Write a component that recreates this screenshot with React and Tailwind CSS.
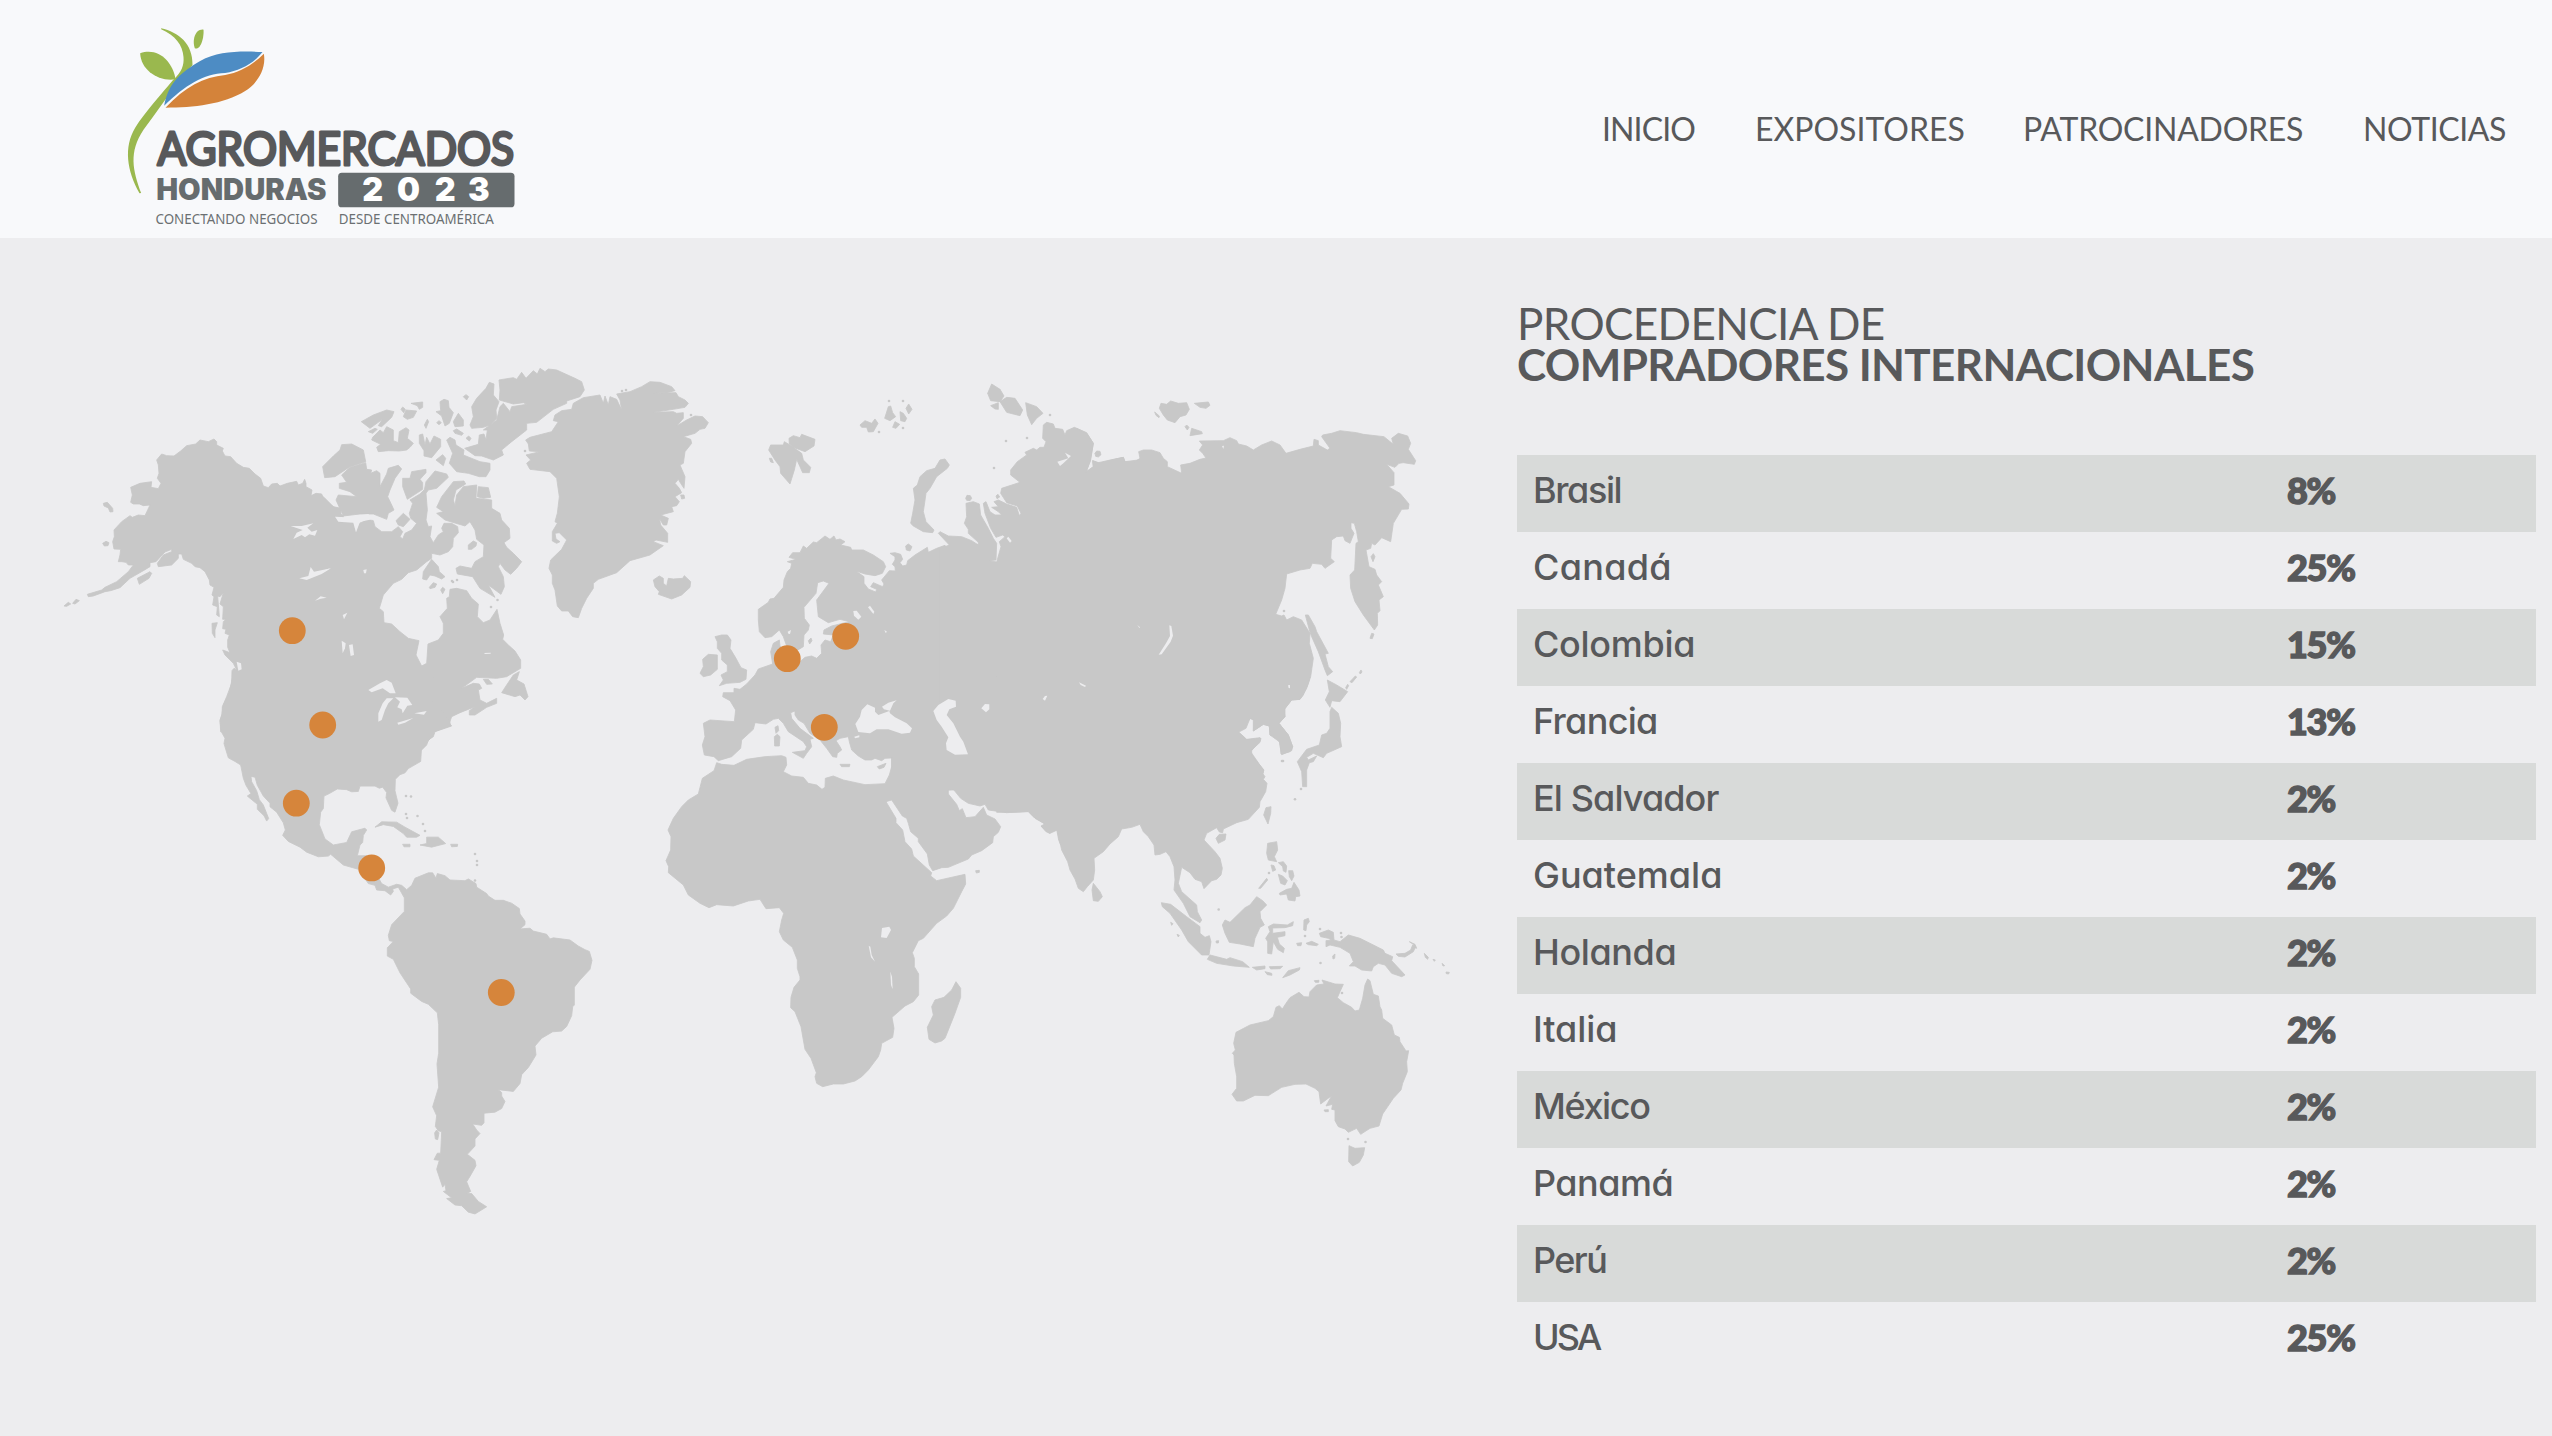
const NAV = [
  { label: "INICIO", width: "w-[92px]", tracking: "tracking-[-0.9px]" },
  { label: "EXPOSITORES", width: "w-[207px]", tracking: "tracking-[0px]" },
  { label: "PATROCINADORES", width: "w-[279px]", tracking: "tracking-[-0.25px]" },
  { label: "NOTICIAS", width: "w-[140px]", tracking: "tracking-[-0.4px]" },
];

const ROWS = [
  { country: "Brasil", share: "8%", tracking: "tracking-[-1.4px]" },
  { country: "Canadá", share: "25%", tracking: "tracking-[0.3px]" },
  { country: "Colombia", share: "15%", tracking: "tracking-[-0.3px]" },
  { country: "Francia", share: "13%", tracking: "tracking-[-0.7px]" },
  { country: "El Salvador", share: "2%", tracking: "tracking-[-0.9px]" },
  { country: "Guatemala", share: "2%", tracking: "tracking-[0px]" },
  { country: "Holanda", share: "2%", tracking: "tracking-[-0.4px]" },
  { country: "Italia", share: "2%", tracking: "tracking-[-0.1px]" },
  { country: "México", share: "2%", tracking: "tracking-[-1.4px]" },
  { country: "Panamá", share: "2%", tracking: "tracking-[-0.5px]" },
  { country: "Perú", share: "2%", tracking: "tracking-[-1.6px]" },
  { country: "USA", share: "25%", tracking: "tracking-[-3px]" },
];

const PINS = [
  [292.3, 630.7],
  [322.7, 725],
  [296.3, 803.2],
  [371.7, 867.9],
  [501.3, 992.5],
  [787.3, 658.7],
  [845.7, 636.3],
  [824.3, 727.3],
];

/* Each region keeps its own drawing units; `at` places it on the map. */
const LAND = [
  {
    name: "alaska-canada-west",
    at: "translate(50 350) scale(0.33333)",
    shapes: [
      "320,330 335,312 350,317 372,318 392,303 410,287 437,282 450,270 475,275 492,267 500,275 500,285 520,295 517,303 525,318 542,320 560,340 580,352 598,355 615,372 632,385 640,408 655,413 665,402 682,400 690,408 712,400 740,394 745,405 758,400 764,388 768,400 768,410 786,420 783,437 798,430 815,432 822,450 840,463 855,473 870,475 872,492 880,500 880,1145 512,1145 510,1110 516,1095 517,1070 530,1040 545,1000 546,962 552,955 560,960 550,940 525,915 518,900 540,908 533,892 533,870 538,855 525,850 528,838 518,836 520,815 528,808 518,808 520,770 510,762 520,728 510,740 503,738 508,800 500,795 502,770 488,765 492,740 486,735 492,712 480,705 478,690 465,665 450,653 435,650 425,640 400,628 395,612 385,612 385,625 365,645 325,650 322,640 340,615 365,605 365,598 345,606 318,635 300,638 300,650 280,662 240,685 210,713 182,722 165,725 130,738 115,740 112,733 155,720 165,712 200,695 235,665 250,645 235,645 228,637 215,635 205,635 210,615 212,598 192,597 188,575 193,560 192,540 215,515 240,497 247,502 265,495 285,497 293,480 300,465 280,467 268,462 250,462 242,457 247,435 242,412 270,400 305,395 303,412 325,416 333,400 322,385 327,370 325,345",
      "262,685 300,665 305,670 297,685 268,703",
      "42,768 55,757 62,762 50,769",
      "68,760 78,748 88,752 75,762",
      "160,460 172,457 188,475 189,485 180,486 175,474 162,468",
      "158,580 168,574 177,578 174,587 163,588",
      "486,820 502,818 495,840 495,863 487,850",
    ],
  },
  {
    name: "canada-east-greenland",
    at: "translate(320 350) scale(0.33333)",
    shapes: [
      "0,432 15,445 40,470 62,475 62,492 70,499 42,502 55,515 100,517 108,547 118,520 145,508 160,512 165,530 185,545 215,545 235,530 248,545 240,560 248,567 255,550 275,540 290,520 272,505 268,490 278,460 270,450 300,432 312,420 318,430 322,480 318,510 325,530 335,528 330,560 340,578 355,555 370,545 365,535 372,520 395,520 413,530 415,548 400,565 398,590 385,605 360,615 335,610 335,625 320,635 290,660 265,668 245,688 220,700 190,735 178,775 190,785 192,818 215,822 240,845 265,865 297,872 288,915 305,948 320,940 324,882 355,870 370,850 370,820 360,800 382,775 380,745 388,740 390,718 410,715 440,722 455,745 475,762 472,800 490,818 510,810 531,778 540,820 551,855 548,868 565,885 585,903 602,930 602,955 580,968 560,980 530,985 470,982 425,1015 460,1000 478,1002 485,1015 475,1020 480,1050 500,1060 530,1045 530,1060 500,1072 465,1095 448,1095 448,1082 465,1070 420,1088 395,1100 388,1120 395,1128 345,1145 340,1160 325,1170 320,1185 305,1200 0,1200",
      "598,965 590,990 612,1002 624,1040 615,1050 600,1035 585,1040 545,1028 560,1005 580,975",
      "490,988 505,988 517,1002 500,1003",
      "8,350 40,318 60,300 65,284 95,282 130,300 137,335 90,350 45,380 14,383",
      "65,375 90,352 137,338 140,358 155,360 152,370 170,362 180,370 180,410 200,372 205,355 235,346 245,357 225,385 210,420 203,440 215,465 222,480 205,490 200,508 160,492 120,492 70,498 48,450 55,435 110,440 90,425 58,415 58,400 80,397",
      "248,385 270,385 275,365 318,358 318,368 300,388 308,398 308,418 262,448 248,410",
      "318,430 312,425 318,395 345,363 380,372 385,382 350,415 325,420",
      "228,512 250,490 270,508 250,530 235,525",
      "350,472 365,440 400,395 432,393 437,402 408,420 400,450 405,467 410,435 430,410 470,405 468,445 515,450 515,475 540,490 545,510 568,535 570,565 552,578 560,592 580,610 605,635 590,655 572,673 555,660 540,640 535,650 550,680 553,710 543,733 505,705 525,742 480,715 458,680 412,672 408,655 420,648 455,655 465,635 490,620 492,585 470,568 465,540 450,515 435,528 375,510 350,490 370,485",
      "475,410 505,413 512,442 490,445 472,440",
      "388,340 398,310 380,270 390,262 405,270 408,285 432,300 430,315 480,335 510,340 510,360 498,380 478,380 445,370 410,365",
      "434,295 475,283 478,255 492,252 498,270 502,240 490,240 530,210 540,170 550,160 570,185 575,170 620,163 610,158 580,162 538,150 540,120 537,90 580,83 590,88 605,67 618,85 640,62 652,72 660,55 675,65 685,57 710,60 765,85 785,95 793,120 780,140 740,153 740,160 700,178 650,217 620,220 620,240 575,275 545,300 550,315 520,330 485,318 465,317",
      "450,225 460,200 455,170 470,145 498,115 508,97 522,102 520,135 537,155 528,180 530,205 510,225 490,232 455,235",
      "308,687 310,665 335,628 355,650 358,665 375,680 365,687 345,678 330,675 320,690",
      "328,712 340,698 350,702 345,712 330,716",
      "362,720 368,712 375,718 368,731",
      "445,585 460,573 470,578 468,588 455,598 445,598",
      "158,262 180,240 190,248 200,230 220,240 220,272 235,278 238,245 258,233 267,240 262,265 280,280 270,292 260,300 238,303 205,302 175,305 170,292 182,283 155,270",
      "124,215 160,195 200,180 222,185 215,202 185,230 175,227 187,208 150,235",
      "145,245 165,235 172,238 158,250",
      "250,200 258,180 290,183 280,202 262,208",
      "273,160 308,156 308,172 298,178 292,167",
      "348,185 362,182 360,155 372,148 385,152 387,172 400,188 388,220 375,228 365,198",
      "298,255 308,252 315,285 320,262 330,282 342,258 362,268 362,290 335,323 312,318 312,302 298,280",
      "348,330 368,314 377,325 370,347",
      "400,215 415,190 430,210 430,228 405,230",
      "400,242 410,237 430,250 425,256 405,250",
      "430,140 438,134 446,140 440,150",
      "313,225 322,208 326,215 318,235",
      "438,265 446,258 453,265 448,273",
      "350,218 357,212 364,218 357,224",
      "243,178 248,171 256,178 251,188",
      "617,270 630,262 695,245 715,215 700,212 705,195 725,182 755,178 760,160 790,143 840,135 850,160 855,138 865,165 870,140 890,148 905,180 900,150 890,132 930,125 965,110 990,95 1020,97 1055,110 1065,122 1040,128 990,130 1068,128 1075,140 1095,150 1105,160 1095,172 1060,178 1000,187 1060,185 1070,190 1090,188 1090,205 1070,228 1100,210 1125,198 1148,200 1165,218 1155,235 1140,238 1125,250 1090,260 1112,268 1115,280 1095,305 1090,340 1080,345 1095,380 1092,415 1082,400 1075,388 1065,400 1078,415 1085,428 1065,440 1078,455 1070,467 1055,470 1060,485 1022,495 1045,505 1040,525 1030,525 1018,505 1022,525 1043,550 1043,577 1008,570 1000,575 1030,587 990,615 930,632 890,668 835,688 820,700 820,715 800,745 785,775 775,803 758,800 745,783 725,783 712,768 705,720 697,700 697,675 687,655 692,630 725,598 740,570 730,560 718,548 705,550 708,567 720,575 710,580 697,573 697,545 712,520 705,515 712,490 718,440 710,385 690,365 630,358 620,340 632,330 618,315 660,305 628,303 625,282",
      "1000,690 1018,678 1030,685 1030,700 1040,708 1045,685 1060,687 1088,685 1093,677 1112,695 1110,712 1085,735 1055,747 1015,733 1018,725 1005,710",
      "1082,435 1092,435 1094,445 1085,447",
    ],
  },
  {
    name: "usa-south-america",
    at: "translate(200 680) scale(0.33333 0.35714)",
    shapes: [
      "97,-5 88,35 70,70 66,95 60,115 64,145 75,163 72,178 85,218 105,228 122,238 130,275 138,295 153,318 142,325 172,348 172,362 192,380 200,395 206,388 190,350 178,335 170,310 155,285 153,270 165,272 172,295 190,325 210,345 210,355 230,370 250,400 256,420 248,435 265,452 300,468 320,482 355,495 385,493 392,488 430,518 475,530 505,570 525,575 530,588 555,590 572,602 580,592 578,585 595,580 613,610 613,648 575,685 565,715 568,730 580,732 562,750 562,773 580,782 600,820 632,865 632,877 665,900 685,908 712,932 716,965 716,1045 711,1075 716,1140 698,1195 710,1220 706,1250 715,1262 725,1265 722,1325 712,1325 702,1343 718,1345 710,1370 728,1420 735,1412 738,1430 730,1432 755,1450 740,1452 765,1470 785,1472 805,1490 825,1495 860,1475 835,1460 815,1438 800,1438 790,1460 800,1438 812,1432 800,1405 813,1385 828,1360 825,1345 802,1328 825,1305 825,1285 840,1270 830,1260 818,1243 845,1247 852,1240 852,1213 885,1210 905,1200 915,1180 905,1165 905,1155 895,1147 940,1152 960,1130 965,1105 985,1085 1008,1050 1005,1025 1025,1003 1058,985 1085,983 1100,970 1115,940 1118,915 1123,910 1123,860 1140,840 1170,810 1176,785 1168,760 1155,755 1135,745 1110,728 1060,722 1050,725 1040,712 1000,703 990,695 960,697 975,685 975,675 960,655 958,640 935,625 910,617 885,617 865,605 860,598 830,580 828,570 805,557 795,562 750,560 735,548 712,542 708,555 698,540 685,540 645,555 635,575 620,587 605,575 590,572 565,580 545,570 530,545 505,500 500,492 472,492 480,462 488,455 490,435 500,420 495,415 455,425 440,455 400,462 375,445 358,405 362,370 370,360 372,325 388,318 412,305 440,307 455,313 475,312 480,297 525,297 538,303 548,300 560,315 558,330 575,365 585,370 594,345 585,310 586,278 600,265 615,260 625,248 662,228 665,185 670,190 685,170 695,160 700,145 752,128 748,112 700,60 700,-5",
      "525,412 545,397 590,398 615,412 660,435 650,440 620,440 610,430 580,410 550,405",
      "680,440 715,440 737,458 695,468 660,462 680,458",
      "608,460 630,460 630,467 612,467",
      "752,460 773,460 772,466 755,467",
      "704,1268 710,1260 717,1268 713,1287 706,1285",
    ],
  },
  {
    name: "europe",
    at: "translate(640 520) scale(0.33333)",
    shapes: [
      "355,268 385,247 390,237 402,235 430,202 432,180 442,155 452,145 455,130 442,125 468,118 447,112 458,98 480,98 490,78 500,85 520,66 530,68 555,48 570,58 582,48 588,60 600,57 615,65 602,75 632,82 635,90 670,90 700,105 730,125 737,140 727,160 705,167 675,162 648,153 672,170 672,190 685,207 707,216 710,208 692,200 700,188 728,200 732,192 725,180 748,152 766,153 765,140 757,133 765,120 765,110 750,100 765,98 782,103 788,118 780,128 788,138 800,135 803,122 825,105 862,82 865,97 890,85 915,76 922,86 928,75 1015,75 1060,140 1210,140 1210,810 755,810 755,714 735,715 725,722 705,715 695,720 675,720 655,708 635,690 628,665 625,650 600,655 588,662 600,680 605,690 592,700 590,712 578,710 560,685 540,660 510,640 492,610 475,600 465,585 465,573 452,578 455,595 480,625 500,640 520,655 510,658 515,680 500,700 490,715 457,697 495,692 500,680 490,665 445,635 430,610 415,595 400,598 378,612 345,608 340,628 305,660 302,685 275,710 235,722 222,710 193,705 187,675 195,650 190,610 210,600 283,605 287,570 270,542 248,530 250,518 282,518 282,505 300,508 320,492 345,465 355,447 398,432 392,395 400,370 418,360 420,378 435,395 480,425 495,412 515,408 530,415 545,400 543,375 555,360 572,365 580,345 550,342 552,330 575,318 628,305 600,298 565,308 535,290 530,240 567,190 550,183 533,188 528,220 492,262 493,295 508,315 505,330 492,345 490,380 470,392 440,378 430,350 418,330 395,350 375,353 358,335 355,300",
      "225,350 245,345 262,345 273,360 270,385 288,415 303,443 320,450 318,478 300,487 260,490 238,497 250,480 243,465 262,455 262,435 245,420 245,400 232,385 232,365",
      "180,460 190,440 188,418 205,403 232,405 232,448 212,465 190,470",
      "403,650 412,643 420,650 418,678 404,678",
      "405,622 414,617 416,632 408,640",
      "600,733 630,733 628,740 605,740",
      "712,740 738,730 732,742 718,747",
      "505,362 513,354 516,362 509,372",
      "797,78 805,72 816,80 810,93 799,90",
    ],
  },
  {
    name: "africa-arabia",
    at: "translate(640 750) scale(0.33333)",
    shapes: [
      "755,24 755,-70 1262,-70 1262,285 1256,270 1250,238 1228,250 1205,230 1215,222 1185,205 1165,184 1100,188 1045,180 1035,163 1020,168 985,160 962,145 940,118 925,120 925,132 950,163 958,182 967,176 978,203 1005,200 1030,172 1040,195 1065,207 1082,230 1075,247 1060,260 1058,278 1025,302 995,315 985,327 925,352 905,353 878,362 868,345 862,312 835,275 835,265 812,245 805,220 800,205 787,198 755,150 738,155 768,205 768,218 788,240 795,275 815,297 820,318 875,368 872,378 890,392 975,373 977,402 965,425 940,475 920,498 890,520 850,565 835,572 817,608 823,625 823,650 836,672 836,735 820,755 795,768 756,802 762,835 758,862 725,880 722,900 715,920 685,960 665,980 645,993 610,1002 580,1002 548,1010 530,1000 525,980 529,968 513,925 495,898 490,870 483,830 465,785 452,773 453,742 462,712 480,690 480,680 472,655 472,630 457,592 430,570 418,545 425,510 431,490 418,473 378,476 360,448 325,453 280,468 230,464 207,473 180,460 145,435 130,405 85,368 86,350 78,332 92,300 93,260 84,240 100,205 125,170 145,150 175,132 187,85 222,62 230,38 245,43 282,46 320,28 375,20 425,17 438,22 440,45 430,65 455,78 490,82 505,100 530,105 546,118 555,112 556,85 580,78 610,90 675,104 735,101 748,75 755,50",
      "948,695 962,715 962,742 945,790 915,865 905,873 885,879 867,868 862,832 880,795 875,770 885,750 912,742 935,720",
      "1007,362 1018,361 1018,367 1009,369",
    ],
  },
  {
    name: "siberia-west",
    at: "translate(740 370) scale(0.33333)",
    shapes: [
      "595,490 600,485 625,498 665,500 695,512 715,525 715,517 685,490 685,478 673,460 680,440 678,400 700,395 718,402 722,435 745,475 760,505 770,520 768,570 748,572 770,576 783,530 778,515 795,500 788,495 768,502 752,475 735,430 730,400 738,395 750,425 765,435 785,435 775,425 755,412 775,410 762,395 775,390 800,402 830,412 838,437 843,430 832,408 800,398 782,370 785,355 840,337 812,315 812,300 832,275 860,255 855,247 880,235 890,240 900,232 912,232 918,215 908,205 910,165 920,157 940,162 945,175 968,178 975,195 980,182 1003,172 1040,188 1060,220 1050,275 1038,305 1060,290 1058,272 1075,278 1120,268 1150,262 1155,275 1210,268 1210,995 600,995 600,540 615,530 628,525",
      "512,460 518,430 525,390 520,355 532,345 540,320 560,302 585,295 600,270 615,267 628,285 622,295 590,320 570,355 558,370 550,425 558,455 582,480 578,488 550,485 520,468",
      "86,240 92,225 130,225 133,215 150,225 185,250 190,270 212,292 208,308 188,308 180,290 170,268 163,300 150,342 122,310 120,290 105,270",
      "147,205 160,197 180,203 185,193 225,208 222,228 195,245 160,232 148,222",
      "360,165 375,152 395,160 405,147 414,160 400,185 385,186 380,172 365,172",
      "434,145 445,110 452,108 458,128 467,140 450,152",
      "480,125 490,130 500,145 495,155 482,152",
      "498,115 506,102 516,118 506,132",
      "458,172 465,155 479,163 468,175",
      "743,70 755,42 780,58 792,78 780,95 752,92",
      "780,95 800,82 825,85 848,120 840,137 800,127",
      "752,107 775,98 775,118 765,117",
      "857,98 890,110 909,130 890,145 875,164 862,135",
      "677,385 681,376 691,377 695,385 690,392 680,391",
      "1065,250 1070,243 1080,244 1083,254 1075,261 1067,259",
      "768,378 774,373 779,381 771,386",
      "88,265 95,265 100,278 92,276",
    ],
  },
  {
    name: "siberia-east",
    at: "translate(1080 370) scale(0.33333)",
    shapes: [
      "-10,175 20,190 40,220 32,270 18,308 40,290 38,272 60,280 95,270 130,262 135,275 165,275 180,265 176,245 190,240 215,240 240,248 250,265 262,275 262,290 305,310 302,285 330,280 360,268 378,264 368,250 358,240 368,225 358,213 430,212 450,203 470,212 475,222 500,228 520,240 545,225 575,213 600,225 618,250 660,238 700,228 702,208 715,212 715,225 742,240 750,235 725,200 728,195 755,190 780,182 830,188 850,193 912,200 940,223 935,205 955,190 983,198 992,220 985,238 1007,272 1003,283 970,278 957,280 945,292 920,283 942,308 942,345 925,350 960,370 987,402 985,417 965,418 940,460 932,515 905,503 885,525 875,520 872,535 858,540 867,590 885,598 890,615 905,635 895,645 910,680 897,690 900,722 892,730 893,765 883,780 850,735 825,695 812,655 810,615 824,600 828,520 835,515 830,485 823,460 813,458 813,475 822,490 810,520 795,512 790,498 770,500 755,510 752,565 763,575 735,595 725,583 697,580 690,595 660,600 620,612 615,655 605,690 587,733 605,738 612,735 620,750 640,740 665,750 690,790 688,820 700,865 692,920 680,955 660,988 635,990 612,1020 615,1040 597,1060 625,1095 638,1130 630,1145 603,1152 600,1120 590,1100 570,1095 568,1068 550,1063 520,1083 522,1050 512,1045 475,1085 500,1108 540,1103 540,1113 512,1145 550,1200 550,1210 -10,1210",
      "676,735 685,735 705,770 710,785 745,850 735,852 745,890 758,905 742,917 735,900 715,845 695,800 688,780",
      "742,930 770,945 803,965 780,995 755,992 750,1012 736,990 748,965",
      "755,1012 775,1030 782,1060 780,1100 785,1130 740,1150 730,1163 700,1150 680,1162 685,1170 710,1158 700,1175 688,1178 680,1200 680,1250 668,1250 665,1205 652,1175 680,1138 718,1125 725,1095 740,1090 750,1075 750,1025",
      "238,115 243,100 260,103 272,93 295,100 320,98 328,118 318,135 300,140 285,158 262,150 250,135",
      "343,100 385,96 390,106 378,115 360,112",
      "330,197 335,175 365,185 367,191",
      "315,170 320,165 327,172 322,180",
      "224,126 238,138 237,143 228,136",
      "873,560 880,551 885,560 879,575",
      "870,805 875,790 882,792 877,806",
      "797,953 803,943 806,947 800,958",
      "810,935 826,918 830,921 816,938",
      "838,908 843,900 846,906 841,912",
    ],
  },
  {
    name: "asia-south",
    at: "translate(1000 680) scale(0.33333)",
    shapes: [
      "-10,-10 930,-10 925,10 910,45 900,58 875,60 855,85 855,110 837,130 865,165 878,200 875,212 845,224 838,185 810,165 808,138 790,133 760,153 760,120 750,115 738,145 715,157 740,180 783,175 780,187 755,210 755,225 775,250 792,270 788,280 795,290 790,298 801,310 797,335 780,365 778,382 745,418 710,428 670,447 668,458 658,456 650,443 620,460 612,480 645,515 660,535 667,565 663,585 650,598 635,602 612,626 605,605 585,598 570,578 545,562 535,610 545,635 590,675 592,695 605,720 600,728 570,710 550,670 522,630 525,600 522,560 510,530 498,515 480,523 465,525 462,495 445,470 430,455 420,433 395,442 365,447 355,470 330,492 310,515 282,535 284,570 280,600 262,620 250,635 235,625 225,597 210,570 203,545 185,510 172,450 150,460 138,455 123,438 135,432 100,410 85,395 40,397 -10,397",
      "280,610 300,635 307,650 295,664 280,662 276,630",
      "791,405 798,383 813,380 812,400 804,432",
      "648,475 658,463 678,462 675,480 655,490",
      "803,490 830,485 833,510 823,530 830,545 805,540 800,520",
      "835,548 850,545 860,558 858,577 850,573 848,560",
      "866,572 878,572 882,588 875,602 868,590",
      "835,583 848,588 862,602 855,615 842,610",
      "838,640 860,628 875,625 882,607 897,630 900,648 887,650 885,663 865,660 860,642 840,645",
      "776,625 800,595 803,600 782,625",
      "813,555 822,557 827,570 818,574",
      "667,735 675,720 690,727 735,683 750,675 770,650 788,662 800,675 780,695 782,715 793,735 780,742 765,775 760,800 720,792 688,787 675,760",
      "484,668 512,673 560,710 600,740 600,760 615,772 628,767 633,785 627,825 605,825 565,785 545,750 510,700 487,680",
      "622,838 630,825 680,838 690,833 728,845 748,862 700,858 650,850",
      "757,862 795,858 795,866 770,870",
      "808,860 848,859 840,866 812,867",
      "795,875 815,880 816,886 802,884",
      "848,893 865,872 900,863 898,870 870,885",
      "810,755 805,740 820,732 862,735 880,725 878,737 855,743 818,744 818,760 855,755 855,767 832,772 838,792 853,805 850,818 833,808 820,785 815,822 803,820 803,785 797,775",
      "912,720 925,715 928,725 920,735 918,752 911,750",
      "918,790 935,784 955,793 950,797 925,794",
      "890,790 905,788 903,797 893,797",
      "958,760 985,750 1000,757 1002,780 1020,785 1045,765 1080,775 1150,810 1155,820 1178,830 1175,842 1215,885 1205,890 1175,880 1155,855 1135,850 1120,860 1115,873 1085,870 1065,858 1048,858 1060,845 1050,820 1020,802 990,795 978,800 978,782 995,780 985,775 962,770",
      "1188,822 1215,820 1232,810 1238,795 1247,800 1240,815 1215,831 1195,829",
      "1228,785 1245,793 1250,805 1245,803 1240,793",
      "1273,820 1285,832 1283,838 1276,832",
      "1299,838 1306,840 1303,844",
      "1326,850 1334,857 1329,858",
      "1338,876 1348,877 1346,882 1339,881",
      "998,828 1005,822 1004,835 999,837",
      "648,783 656,782 655,789 649,789",
      "512,727 519,731 515,736",
      "531,763 538,766 535,771",
    ],
  },
  {
    name: "oceania",
    at: "translate(1200 920) scale(0.33333)",
    shapes: [
      "108,337 150,315 205,302 220,290 228,262 238,257 247,267 258,250 270,233 297,217 312,230 327,231 330,215 350,195 372,192 366,180 405,192 430,193 420,215 412,233 430,248 455,262 465,273 478,270 488,235 495,195 503,177 510,182 520,223 535,228 540,260 545,270 548,295 575,315 583,345 598,352 600,365 618,393 626,392 620,425 622,455 608,490 603,510 580,535 548,582 537,618 510,625 482,643 470,625 445,637 435,627 415,620 405,602 405,570 395,568 398,553 378,558 395,527 362,552 357,515 345,505 318,492 285,493 245,502 205,527 165,526 130,543 110,543 96,523 110,505 110,470 103,430 102,405 97,400 106,390 101,370",
      "372,570 385,569 385,575 375,575",
      "447,677 465,685 494,683 490,705 478,727 458,738 446,725",
      "343,182 357,181 356,187 346,187",
    ],
  },
];

const WATER = [
  {
    name: "canada-lakes",
    at: "translate(50 350) scale(0.33333)",
    shapes: [
      "722,528 755,528 790,520 772,533 785,545 802,540 795,557 778,553 765,562 755,555 730,567 740,548 758,540",
      "748,685 775,678 782,651 792,665 843,655 815,672 770,690",
      "795,752 812,739 830,743 812,746",
      "855,500 890,502 955,492 967,508 930,515 918,547 910,518 865,515",
      "875,872 887,880 885,895 878,910",
      "897,885 908,883 912,915 902,918",
      "940,660 950,658 948,670 942,670",
      "878,795 892,788 882,808",
      "560,935 573,940 575,958 565,962",
    ],
  },
  {
    name: "great-lakes",
    at: "translate(320 350) scale(0.33333)",
    shapes: [
      "145,1020 180,1000 200,990 215,998 227,1030 210,1030 188,1015 155,1027",
      "188,1060 200,1045 220,1045 205,1060 195,1080 185,1110 175,1115 175,1090",
      "225,1042 262,1043 277,1065 262,1067 248,1090 245,1078 232,1072 240,1055",
      "232,1118 280,1104 255,1118 235,1124",
      "283,1090 320,1083 312,1094",
      "492,909 512,908 512,911 495,912",
      "0,665 30,655 10,667",
    ],
  },
  {
    name: "inland-seas",
    at: "translate(640 520) scale(0.33333)",
    shapes: [
      "646,612 660,590 665,570 682,553 705,563 705,575 715,585 748,573 750,580 765,592 800,610 816,625 810,638 785,641 745,628 710,628 690,640 655,636",
      "726,560 745,548 770,541 760,550 750,572 732,568",
      "880,573 895,555 925,537 947,542 948,560 928,568 920,585 940,610 950,630 960,650 970,665 984,703 945,704 920,690 918,670 925,652 905,620 890,600",
      "1024,565 1035,552 1048,553 1048,568 1038,577",
      "640,273 650,272 664,290 655,299 642,287",
      "684,262 690,257 703,275 700,282",
      "643,650 658,646 658,652 645,655",
      "443,335 453,330 450,342 445,341",
      "733,330 741,335 737,339",
    ],
  },
  {
    name: "african-lakes",
    at: "translate(640 750) scale(0.33333)",
    shapes: [
      "726,534 748,530 753,540 740,564 723,562",
      "686,587 691,590 695,615 705,635 693,622",
      "751,665 756,680 758,718 753,705",
    ],
  },
  {
    name: "asian-lakes",
    at: "translate(740 370) scale(0.33333)",
    shapes: [
      "952,275 985,265 975,248 993,258 970,280 960,288",
      "800,505 805,500 815,513 810,518",
      "1017,937 1038,947 1035,951 1022,945",
      "908,987 915,978 922,977 915,992",
    ],
  },
  {
    name: "baikal",
    at: "translate(1080 370) scale(0.33333)",
    shapes: [
      "268,766 274,768 279,797 272,815 245,853 236,854 258,820 270,798",
      "172,765 180,772 178,774",
      "624,946 630,945 630,955 626,954",
      "426,228 432,227 430,237",
    ],
  },
];

const ISLETS = [
  [406, 796], [411, 796.5], [406, 814], [407, 818], [417.5, 816], [423, 824], [425, 831], [475, 854], [477, 861], [477, 865], [475, 880.5],
  [1283, 761], [1301, 789], [1295, 799.3], [1284, 611], [1218.7, 909.5], [1269, 873], [1282, 761],
  [889, 401], [903, 401], [879, 432], [903, 428], [994, 468], [1006, 441], [1027, 438], [1050, 415], [1320, 929], [1341, 933], [1341.5, 937], [1342, 993],
  [1320.5, 963], [1305, 936], [626, 390], [622, 391], [691, 415], [525, 451], [497.5, 600],
  [1348, 1139], [1365.5, 1142], [453, 582], [454, 592], [491, 607], [452, 581], [457, 580],
];

function Regions({ regions, className }) {
  return regions.map((region) => (
    <g key={region.name} transform={region.at} className={className}>
      {region.shapes.map((points) => (
        <polygon key={points} points={points} strokeWidth="2.5" strokeLinejoin="round" />
      ))}
    </g>
  ));
}

function WorldMap() {
  return (
    <svg viewBox="50 350 1420 880" className="block h-[880px] w-[1420px]" role="img" aria-label="Mapa mundial">
      <Regions regions={LAND} className="fill-[#c8c8c8] stroke-[#c8c8c8]" />
      <Regions regions={WATER} className="fill-[#ededef] stroke-none" />
      {ISLETS.map(([x, y], i) => (
        <circle key={i} cx={x} cy={y} r="1.3" className="fill-[#c8c8c8]" />
      ))}
      {PINS.map(([x, y]) => (
        <circle key={x} cx={x} cy={y} r="13.4" className="fill-[#d6853b]" />
      ))}
    </svg>
  );
}

function Logo() {
  return (
    <svg viewBox="84 50 1166 600" className="block h-[200px] w-[389px] overflow-visible" role="img" aria-label="Agromercados Honduras 2023">
      <g className="fill-[#9ab84e]">
        <path d="M183,54 C235,66 279,100 277,165 L240,205 C205,255 165,310 130,358 C85,425 98,480 123,548 L118,549 C80,480 70,410 105,352 C135,305 185,250 218,210 C245,185 252,165 250,140 C248,105 225,75 183,57Z" />
        <path d="M120,129 C175,110 218,155 226,207 C175,215 122,180 120,129Z" />
        <path d="M310,58 C285,55 275,90 284,114 C302,120 312,80 310,58Z" />
      </g>
      <path d="M192,286 C205,215 245,185 300,152 C355,122 420,122 487,125 C460,160 420,180 375,188 C310,190 255,225 192,286Z" className="fill-[#4d8cc4]" />
      <path d="M196,292 C255,230 310,200 375,194 C420,186 460,162 491,130 C500,180 465,225 435,242 C370,282 280,292 196,292Z" className="fill-[#d4833a]" />
      <text x="172" y="464" textLength="1070" lengthAdjust="spacingAndGlyphs" strokeWidth="9" strokeLinejoin="round" className="fill-[#58595b] stroke-[#58595b] font-['Lato'] text-[142px] font-normal">AGROMERCADOS</text>
      <text x="168" y="570" textLength="511" lengthAdjust="spacingAndGlyphs" className="fill-[#666c6e] font-['Inter'] text-[89px] font-black">HONDURAS</text>
      <rect x="714" y="487" width="529" height="104" rx="11" className="fill-[#666c6e]" />
      <g className="fill-white font-['Inter'] text-[97px] font-black [text-anchor:middle]">
        <text x="818" y="572">2</text>
        <text x="925" y="572">0</text>
        <text x="1035" y="572">2</text>
        <text x="1136" y="572">3</text>
      </g>
      <g className="fill-[#6b7072] font-['Noto_Sans'] text-[42px]">
        <text x="166" y="641" textLength="486" lengthAdjust="spacingAndGlyphs">CONECTANDO NEGOCIOS</text>
        <text x="716" y="641" textLength="465" lengthAdjust="spacingAndGlyphs">DESDE CENTROAMÉRICA</text>
      </g>
    </svg>
  );
}

export default function App() {
  return (
    <div className="flex h-[1436px] w-[2552px] flex-col overflow-hidden bg-[#ededef] text-[#58595b]">
      <header className="flex h-[238px] shrink-0 items-center justify-between bg-[#f8f9fb] pr-[49px] pl-[128px]">
        <div className="mt-[16px]">
          <Logo />
        </div>
        <nav className="mt-[19px] flex gap-[61px] font-['Lato',sans-serif] text-[32px] leading-[40px] whitespace-nowrap">
          {NAV.map((item) => (
            <a key={item.label} className={`${item.width} ${item.tracking}`}>
              {item.label}
            </a>
          ))}
        </nav>
      </header>
      <main className="flex flex-1 items-start">
        <section className="w-[1517px] shrink-0 pt-[112px] pl-[50px]">
          <WorldMap />
        </section>
        <section className="w-[1019px] pt-[65px]">
          <h1 className="h-[152px] font-['Lato',sans-serif] text-[44px] leading-[40.5px] tracking-[-0.62px]">
            <span className="block">PROCEDENCIA DE</span>
            <strong className="block font-bold">COMPRADORES INTERNACIONALES</strong>
          </h1>
          <ul className="text-[36px] leading-[44px]">
            {ROWS.map((row) => (
              <li key={row.country} className="flex h-[77px] items-start pt-[13px] pl-[16px] odd:bg-[#d8dad9]">
                <span className={`w-[754px] font-['Inter',sans-serif] font-medium [font-feature-settings:'cv11'] ${row.tracking}`}>{row.country}</span>
                <span className="font-['Lato',sans-serif] font-black tracking-[-1.3px] [-webkit-text-stroke:1.4px_#58595b]">{row.share}</span>
              </li>
            ))}
          </ul>
        </section>
      </main>
    </div>
  );
}
